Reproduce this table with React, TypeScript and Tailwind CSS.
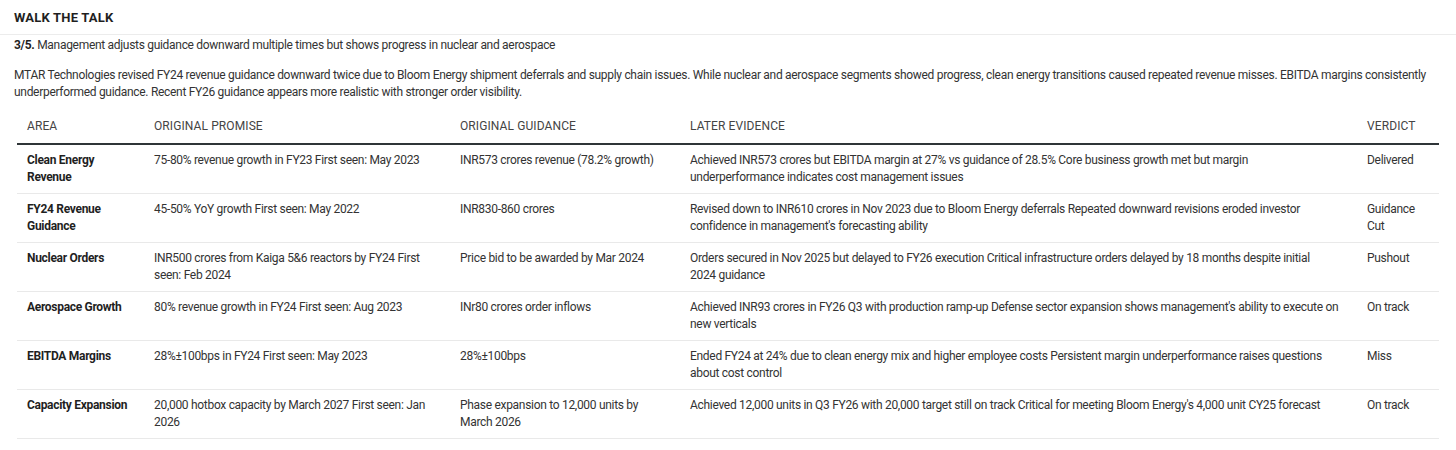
import React from 'react';

type Row = { area: string; promise: string; guidance: string; evidence: string; verdict: string };

const ROWS: Row[] = [
    {
        area: 'Clean Energy Revenue',
        promise: '75-80% revenue growth in FY23 First seen: May 2023',
        guidance: 'INR573 crores revenue (78.2% growth)',
        evidence: 'Achieved INR573 crores but EBITDA margin at 27% vs guidance of 28.5% Core business growth met but margin underperformance indicates cost management issues',
        verdict: 'Delivered',
    },
    {
        area: 'FY24 Revenue Guidance',
        promise: '45-50% YoY growth First seen: May 2022',
        guidance: 'INR830-860 crores',
        evidence: "Revised down to INR610 crores in Nov 2023 due to Bloom Energy deferrals Repeated downward revisions eroded investor confidence in management's forecasting ability",
        verdict: 'Guidance Cut',
    },
    {
        area: 'Nuclear Orders',
        promise: 'INR500 crores from Kaiga 5&6 reactors by FY24 First seen: Feb 2024',
        guidance: 'Price bid to be awarded by Mar 2024',
        evidence: 'Orders secured in Nov 2025 but delayed to FY26 execution Critical infrastructure orders delayed by 18 months despite initial 2024\u00a0guidance',
        verdict: 'Pushout',
    },
    {
        area: 'Aerospace Growth',
        promise: '80% revenue growth in FY24 First seen: Aug 2023',
        guidance: 'INr80 crores order inflows',
        evidence: "Achieved INR93 crores in FY26 Q3 with production ramp-up Defense sector expansion shows management's ability to execute on new verticals",
        verdict: 'On track',
    },
    {
        area: 'EBITDA Margins',
        promise: '28%±100bps in FY24 First seen: May 2023',
        guidance: '28%±100bps',
        evidence: 'Ended FY24 at 24% due to clean energy mix and higher employee costs Persistent margin underperformance raises questions about cost control',
        verdict: 'Miss',
    },
    {
        area: 'Capacity Expansion',
        promise: '20,000 hotbox capacity by March 2027 First seen: Jan 2026',
        guidance: 'Phase expansion to 12,000 units by March 2026',
        evidence: "Achieved 12,000 units in Q3 FY26 with 20,000 target still on track Critical for meeting Bloom Energy's 4,000 unit CY25 forecast",
        verdict: 'On track',
    },
];

const App: React.FC = () => {
    return (
        <div className="w-[1456px] h-[450px] bg-white text-[#333] font-['Roboto','Liberation_Sans',Arial,sans-serif] text-[12px] leading-[17px] tracking-[-0.3px] overflow-hidden">
            <div className="h-[35px] border-b border-[#ececec] px-[14px] flex items-center">
                <h1 className="text-[13px] font-bold tracking-[0.2px] text-[#1f1f1f]">WALK THE TALK</h1>
            </div>

            <div className="px-[14px] pt-[2px]">
                <p>
                    <span className="font-bold text-[#1f1f1f]">3/5.</span> Management adjusts guidance downward multiple times but shows progress in nuclear and aerospace
                </p>
                <p className="mt-[13px]">
                    MTAR Technologies revised FY24 revenue guidance downward twice due to Bloom Energy shipment deferrals and supply chain issues. While nuclear and aerospace segments showed progress, clean energy transitions caused repeated revenue misses. EBITDA margins consistently underperformed guidance. Recent FY26 guidance appears more realistic with stronger order visibility.
                </p>

                {/* Promise vs evidence table */}
                <table className="mt-[10px] ml-[3px] w-[1422px] table-fixed border-collapse">
                    <colgroup>
                        <col className="w-[127px]" />
                        <col className="w-[306px]" />
                        <col className="w-[230px]" />
                        <col className="w-[677px]" />
                        <col className="w-[82px]" />
                    </colgroup>
                    <thead>
                        <tr className="border-b-2 border-[#2f3538]">
                            {['AREA', 'ORIGINAL PROMISE', 'ORIGINAL GUIDANCE', 'LATER EVIDENCE', 'VERDICT'].map(h => (
                                <th key={h} className="text-left font-normal text-[#444] tracking-[0.1px] px-[10px] pt-[7px] pb-[8px] align-top">
                                    {h}
                                </th>
                            ))}
                        </tr>
                    </thead>
                    <tbody>
                        {ROWS.map(row => (
                            <tr key={row.area} className="border-b border-[#e9e9e9]">
                                <td className="px-[10px] py-[7px] align-top h-[49px] font-bold text-[#1f1f1f]">{row.area}</td>
                                <td className="px-[10px] py-[7px] align-top">{row.promise}</td>
                                <td className="px-[10px] py-[7px] align-top">{row.guidance}</td>
                                <td className="pl-[10px] pr-[15px] py-[7px] align-top">{row.evidence}</td>
                                <td className="px-[10px] py-[7px] align-top">{row.verdict}</td>
                            </tr>
                        ))}
                    </tbody>
                </table>
            </div>
        </div>
    );
};

export default App;
